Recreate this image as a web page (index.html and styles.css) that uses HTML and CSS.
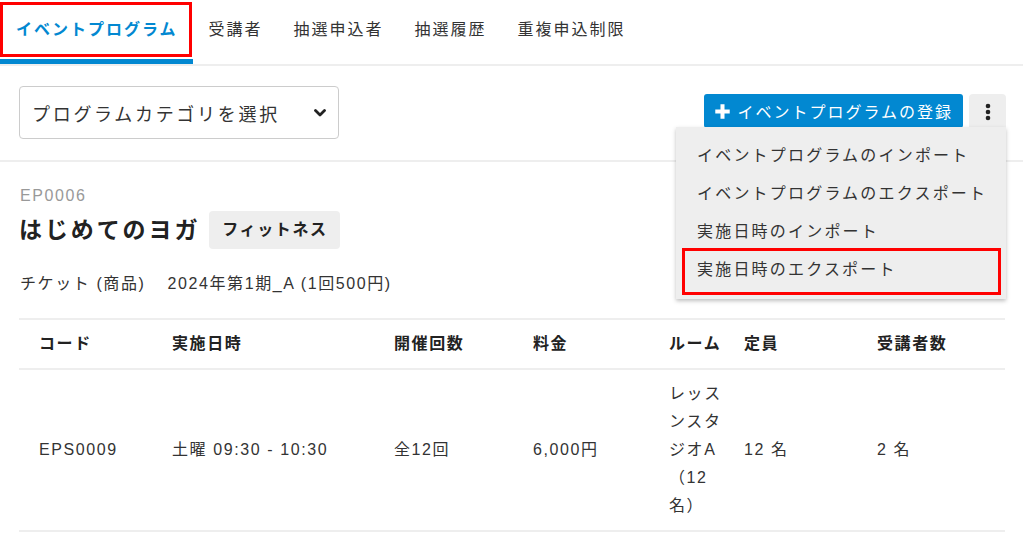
FILE: index.html
```html
<!DOCTYPE html>
<html lang="ja">
<head>
    <meta charset="UTF-8">
    <meta name="viewport" content="width=device-width, initial-scale=1.0">
    <title>イベントプログラム</title>
    <link rel="stylesheet" href="styles.css">
</head>
<body>
    <nav class="tabs">
        <a class="tab active marked" href="#">イベントプログラム</a>
        <a class="tab" href="#">受講者</a>
        <a class="tab" href="#">抽選申込者</a>
        <a class="tab" href="#">抽選履歴</a>
        <a class="tab" href="#">重複申込制限</a>
    </nav>

    <div class="toolbar">
        <div class="select-box">
            <span>プログラムカテゴリを選択</span>
            <svg width="12" height="8" viewBox="0 0 12 8"><path d="M1.5 1.5 L6 6 L10.5 1.5" fill="none" stroke="#222" stroke-width="2.8" stroke-linecap="round" stroke-linejoin="round"/></svg>
        </div>
        <div class="actions">
            <button type="button" class="btn-primary">
                <svg width="17" height="17" viewBox="0 0 16 16"><path d="M8 1.2 V14.8 M1.2 8 H14.8" stroke="#fff" stroke-width="3.8"/></svg>
                イベントプログラムの登録
            </button>
            <button type="button" class="btn-more">
                <svg width="6" height="18" viewBox="0 0 6 18"><circle cx="3" cy="3" r="2.3" fill="#222"/><circle cx="3" cy="9" r="2.3" fill="#222"/><circle cx="3" cy="15" r="2.3" fill="#222"/></svg>
            </button>
            <ul class="menu">
                <li>イベントプログラムのインポート</li>
                <li>イベントプログラムのエクスポート</li>
                <li>実施日時のインポート</li>
                <li class="marked">実施日時のエクスポート</li>
            </ul>
        </div>
    </div>

    <section class="program">
        <div class="code">EP0006</div>
        <div class="title-row">
            <h2>はじめてのヨガ</h2>
            <span class="chip">フィットネス</span>
        </div>
        <p class="ticket"><span class="label">チケット (商品)</span>2024年第1期_A (1回500円)</p>

        <table class="sessions">
            <colgroup>
                <col style="width:133px">
                <col style="width:222px">
                <col style="width:139px">
                <col style="width:136px">
                <col style="width:75px">
                <col style="width:133px">
                <col style="width:148px">
            </colgroup>
            <thead>
                <tr>
                    <th>コード</th>
                    <th>実施日時</th>
                    <th>開催回数</th>
                    <th>料金</th>
                    <th>ルーム</th>
                    <th>定員</th>
                    <th>受講者数</th>
                </tr>
            </thead>
            <tbody>
                <tr>
                    <td>EPS0009</td>
                    <td>土曜 09:30 - 10:30</td>
                    <td>全12回</td>
                    <td>6,000円</td>
                    <td>レッスンスタジオA（12名）</td>
                    <td>12 名</td>
                    <td>2 名</td>
                </tr>
            </tbody>
        </table>
    </section>
</body>
</html>
```

FILE: styles.css
```css
body {
    margin: 0;
    font-family: "Liberation Sans", "Noto Sans CJK JP", sans-serif;
    font-size: 16px;
    letter-spacing: 0.1em;
    color: #333;
    background: #fff;
}
.tabs {
    display: flex;
    border-bottom: 2px solid #eee;
}
.tab {
    position: relative;
    display: flex;
    align-items: center;
    box-sizing: border-box;
    height: 64px;
    padding: 0 15px 4px 16px;
    border-bottom: 5px solid transparent;
    color: #333;
    text-decoration: none;
    letter-spacing: 2px;
}
.tab.active {
    color: #0288d1;
    font-weight: bold;
    border-bottom-color: #0288d1;
}
.tab.marked::after {
    content: "";
    position: absolute;
    top: 2px;
    left: 0;
    right: 1px;
    bottom: 2px;
    border: 3px solid #ff0000;
}
.toolbar {
    display: flex;
    justify-content: space-between;
    align-items: flex-start;
    padding: 20px 17px 21px 19px;
    border-bottom: 2px solid #eee;
}
.select-box {
    display: flex;
    justify-content: space-between;
    align-items: center;
    box-sizing: border-box;
    width: 320px;
    height: 53px;
    padding: 0 12px 0 12px;
    border: 1px solid #ccc;
    border-radius: 4px;
    font-size: 18px;
    letter-spacing: 2.7px;
    color: #333;
}
.actions {
    position: relative;
    display: flex;
    gap: 6px;
    margin-top: 8px;
}
.btn-primary {
    display: flex;
    align-items: center;
    gap: 6px;
    height: 34px;
    padding: 0 10px 0 10px;
    border: none;
    border-radius: 3px;
    background-color: #0288d1;
    color: #fff;
    font-family: inherit;
    font-size: 16px;
    letter-spacing: 2px;
}
.btn-more {
    display: flex;
    align-items: center;
    justify-content: center;
    width: 37px;
    height: 36px;
    border: none;
    border-radius: 4px 4px 0 0;
    background-color: #eee;
}
.menu {
    position: absolute;
    top: 33px;
    right: 0;
    width: 330px;
    margin: 0;
    padding: 10px 0 10px;
    list-style: none;
    background-color: #eee;
    box-shadow: 0 2px 4px rgba(0, 0, 0, 0.25);
}
.menu li {
    position: relative;
    height: 38px;
    line-height: 38px;
    padding-left: 21px;
    color: #333;
    letter-spacing: 2.2px;
}
.menu li.marked::after {
    content: "";
    position: absolute;
    top: -3px;
    bottom: -6px;
    left: 6px;
    right: 5px;
    border: 3px solid #ff0000;
}
.program {
    padding: 24px 17px 0 19px;
}
.code {
    line-height: 20px;
    color: #999;
    padding-left: 1px;
}
.title-row {
    display: flex;
    align-items: center;
    gap: 9px;
    margin-top: 5px;
}
.title-row h2 {
    margin: 0;
    font-size: 23px;
    line-height: 36px;
    letter-spacing: 2.9px;
    color: #222;
}
.chip {
    display: inline-block;
    height: 38px;
    line-height: 38px;
    padding: 0 12px 0 13px;
    border-radius: 4px;
    background-color: #eee;
    font-weight: bold;
    color: #222;
}
.ticket {
    margin: 24px 0 0 1px;
    line-height: 22px;
}
.ticket .label {
    margin-right: 22px;
}
.sessions {
    width: 986px;
    margin-top: 23px;
    table-layout: fixed;
    border-collapse: collapse;
    border-top: 2px solid #eee;
}
.sessions th,
.sessions td {
    padding: 0 0 0 20px;
    text-align: left;
    vertical-align: middle;
}
.sessions th {
    height: 44px;
    padding-bottom: 4px;
    color: #222;
    border-bottom: 2px solid #eee;
}
.sessions td {
    padding-top: 10px;
    padding-bottom: 10px;
    line-height: 28px;
    border-bottom: 2px solid #eee;
}
```
